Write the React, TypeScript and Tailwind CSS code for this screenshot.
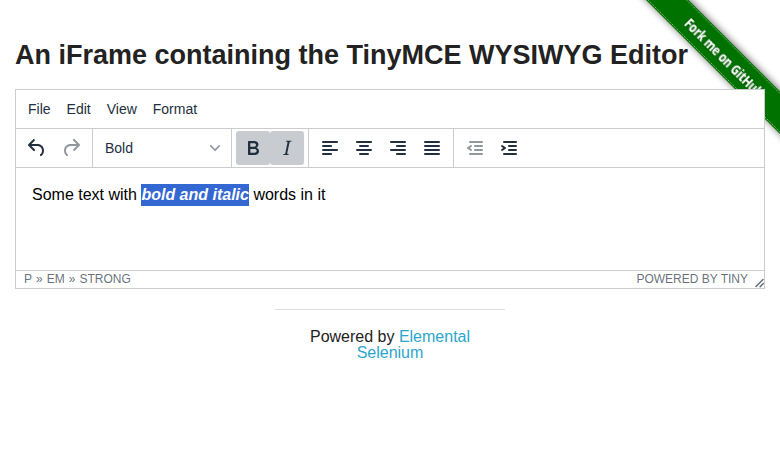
import React from 'react';

const Icon = ({ children, muted = false }: { children: React.ReactNode; muted?: boolean }) => (
  <svg width="24" height="24" viewBox="0 0 24 24" className={muted ? 'fill-[#222f3e]/50' : 'fill-[#222f3e]'}>
    {children}
  </svg>
);

const ToolButton = ({ label, active = false, children }: { label: string; active?: boolean; children: React.ReactNode }) => (
  <button
    aria-label={label}
    className={`flex h-[34px] w-[34px] items-center justify-center rounded-[3px] ${active ? 'bg-[#c8cbcf]' : ''}`}
  >
    {children}
  </button>
);

const Group = ({ last = false, children }: { last?: boolean; children: React.ReactNode }) => (
  <div className={`flex items-center px-1 ${last ? '' : 'border-r border-[#ccc]'}`}>{children}</div>
);

// Each line is [start x, width] on the 24px icon grid.
const Lines = ({ rows }: { rows: number[][] }) => (
  <>
    {rows.map(([x, w], i) => (
      <rect key={i} x={x} y={5 + i * 4} width={w} height="2" rx="1" />
    ))}
  </>
);

const indentRows = [[6, 14], [11, 9], [11, 9], [6, 14]];

const Ribbon = () => (
  <svg width="149" height="149" viewBox="0 0 149 149" className="absolute top-0 right-0" aria-label="Fork me on GitHub">
    <defs>
      <filter id="shade" x="-20%" y="-20%" width="140%" height="140%">
        <feGaussianBlur stdDeviation="3.5" />
      </filter>
      <filter id="textShade">
        <feDropShadow dx="0" dy="0" stdDeviation="1" floodColor="#000" floodOpacity="0.6" />
      </filter>
    </defs>
    <path d="M5 -10 L49.5 -10 L170 110.5 L170 155 Z" fill="#000" opacity="0.5" filter="url(#shade)" />
    <path d="M5 -10 L47.5 -10 L170 112.5 L170 155 Z" fill="#007200" />
    <path d="M7 -10 L167 150 M45.5 -10 L168 112.5" stroke="#8fc08f" strokeWidth="0.9" strokeDasharray="1.4 1" fill="none" />
    <text
      transform="translate(52.5 24.5) rotate(45)"
      textLength="104"
      lengthAdjust="spacingAndGlyphs"
      fill="#fff"
      filter="url(#textShade)"
      className="font-['Open_Sans',sans-serif] text-[14.5px] font-bold"
    >
      Fork me on GitHub
    </text>
  </svg>
);

export default function App() {
  return (
    <div className="relative h-[458px] overflow-hidden bg-white px-[15px] pt-[36px] font-['Liberation_Sans',Arial,sans-serif] text-[#222]">
      <Ribbon />
      <h3 className="relative h-[53px] text-[27px] leading-[38px] font-bold whitespace-nowrap">
        An iFrame containing the TinyMCE WYSIWYG Editor
      </h3>
      <div className="relative flex h-[200px] flex-col border border-[#ccc] bg-white text-[#222f3e]">
        <div className="flex h-[39px] items-center gap-4 border-b border-[#ccc] px-3 text-[14px]">
          <span>File</span>
          <span>Edit</span>
          <span>View</span>
          <span>Format</span>
        </div>
        <div className="flex h-[39px] border-b border-[#ccc]">
          <Group>
            <ToolButton label="Undo">
              <Icon>
                <path d="M6.4 8H12c3.7 0 6.2 2 6.8 5.1.6 2.7-.4 5.6-2.3 6.8a1 1 0 01-1-1.8c1.1-.6 1.8-2.7 1.4-4.6-.5-2.1-2.1-3.5-4.9-3.5H6.4l3.3 3.3a1 1 0 11-1.4 1.4l-5-5a1 1 0 010-1.4l5-5a1 1 0 011.4 1.4L6.4 8z" />
              </Icon>
            </ToolButton>
            <ToolButton label="Redo">
              <Icon muted>
                <path d="M17.6 10H12c-2.8 0-4.4 1.4-4.9 3.5-.4 2 .3 4 1.4 4.6a1 1 0 11-1 1.8c-2-1.2-2.9-4.1-2.3-6.8.6-3 3-5.1 6.8-5.1h5.6l-3.3-3.3a1 1 0 111.4-1.4l5 5a1 1 0 010 1.4l-5 5a1 1 0 01-1.4-1.4l3.3-3.3z" />
              </Icon>
            </ToolButton>
          </Group>
          <Group>
            <button className="flex h-[34px] w-[130px] items-center justify-between pr-[7px] pl-2 text-[14px]">
              Bold
              <svg width="10" height="10" viewBox="0 0 10 10" className="overflow-visible fill-[#222f3e]/50">
                <path d="M8.7 2.2c.3-.3.8-.3 1 0 .4.4.4.9 0 1.2L5.7 7.8c-.3.3-.9.3-1.2 0L.2 3.4a.8.8 0 010-1.2c.3-.3.8-.3 1.1 0L5 6l3.7-3.8z" />
              </svg>
            </button>
          </Group>
          <Group>
            <ToolButton label="Bold" active>
              <Icon>
                <path d="M7.8 19c-.3 0-.5 0-.6-.2l-.2-.5V5.7c0-.2 0-.4.2-.5l.6-.2h5c1.5 0 2.7.3 3.5 1 .7.6 1.1 1.4 1.1 2.5a3 3 0 01-.6 1.9c-.4.6-1 1-1.6 1.2.4.1.9.3 1.3.6s.8.7 1 1.2c.4.4.5 1 .5 1.6 0 1.3-.4 2.3-1.3 3-.8.7-2.1 1-3.8 1H7.8zm5-8.3c.6 0 1.2-.1 1.6-.5.4-.3.6-.7.6-1.3 0-1.1-.8-1.7-2.3-1.7H9.3v3.5h3.4zm.5 6c.7 0 1.3-.1 1.7-.4.4-.4.6-.9.6-1.5s-.2-1-.7-1.4c-.4-.3-1-.4-2-.4H9.4v3.8h4z" />
              </Icon>
            </ToolButton>
            <ToolButton label="Italic" active>
              <Icon>
                <path d="M16.7 4.7l-.1.9h-.3c-.6 0-1 0-1.4.3-.3.3-.4.6-.5 1.1l-2.1 9.8v.6c0 .5.4.8 1.4.8h.2l-.2.8H8l.2-.8h.2c1.1 0 1.8-.5 2-1.5l2-9.8.1-.5c0-.6-.4-.8-1.4-.8h-.3l.2-.9h5.8z" />
              </Icon>
            </ToolButton>
          </Group>
          <Group>
            <ToolButton label="Align left">
              <Icon><Lines rows={[[4, 16], [4, 10], [4, 16], [4, 10]]} /></Icon>
            </ToolButton>
            <ToolButton label="Align center">
              <Icon><Lines rows={[[4, 16], [7, 10], [4, 16], [7, 10]]} /></Icon>
            </ToolButton>
            <ToolButton label="Align right">
              <Icon><Lines rows={[[4, 16], [10, 10], [4, 16], [10, 10]]} /></Icon>
            </ToolButton>
            <ToolButton label="Justify">
              <Icon><Lines rows={[[4, 16], [4, 16], [4, 16], [4, 16]]} /></Icon>
            </ToolButton>
          </Group>
          <Group last>
            <ToolButton label="Decrease indent">
              <Icon muted>
                <Lines rows={indentRows} />
                <path d="M8.6 13.2a1 1 0 01-1.2 1.6l-3-2a1 1 0 010-1.6l3-2a1 1 0 011.2 1.6L6.8 12z" />
              </Icon>
            </ToolButton>
            <ToolButton label="Increase indent">
              <Icon>
                <Lines rows={indentRows} />
                <path d="M4.4 13.2a1 1 0 001.2 1.6l3-2a1 1 0 000-1.6l-3-2a1 1 0 00-1.2 1.6L6.2 12z" />
              </Icon>
            </ToolButton>
          </Group>
        </div>
        <div className="flex-1 px-4 pt-4 text-[16px] leading-[22px] text-black">
          Some text with{' '}
          <em className="inline-block bg-[#3367d1] font-bold text-white">bold and italic</em> words in it
        </div>
        <div className="flex h-[18px] items-center justify-between border-t border-[#ccc] pl-2 text-[12px] leading-[17px] text-[#222f3e]/70">
          <span className="flex gap-1">
            <span>P</span>
            <span>»</span>
            <span>EM</span>
            <span>»</span>
            <span>STRONG</span>
          </span>
          <span className="flex items-end">
            POWERED BY TINY
            <svg width="10" height="10" viewBox="0 0 10 10" className="-mr-px ml-[7px] h-[10px] w-[10px]" aria-hidden="true">
              <path d="M8 1.5L1 8.5M8.3 5.5L5.2 8.6" fill="none" stroke="#646d78" strokeWidth="1.5" strokeLinecap="round" />
            </svg>
          </span>
        </div>
      </div>
      <div className="mx-auto mt-5 w-[230px] border-t border-[#ddd] px-5 pt-[19px] text-center text-[16px] leading-[16px]">
        Powered by <a className="text-[#2ba6cb]">Elemental Selenium</a>
      </div>
    </div>
  );
}
